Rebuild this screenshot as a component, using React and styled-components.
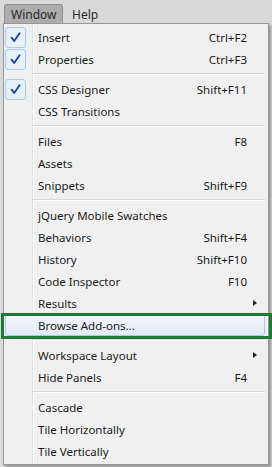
import React from "react";
import styled, { createGlobalStyle } from "styled-components";

const GlobalStyle = createGlobalStyle`
  body {
    margin: 0;
    background: #d9d9d9;
    font-family: "Segoe UI", "Noto Sans", "DejaVu Sans", sans-serif;
    font-size: 11.5px;
    color: #1b1b1b;
    overflow: hidden;
  }
`;

const Screen = styled.div`
  width: 272px;
  height: 467px;
  overflow: hidden;
`;

const MenuBar = styled.div`
  height: 23px;
  display: flex;
  align-items: flex-end;
  padding-left: 4px;
  gap: 1px;
  box-sizing: border-box;
  font-size: 12px;
`;

const Tab = styled.div`
  height: 19px;
  box-sizing: border-box;
  padding: 0 6px 0 ${(p) => (p.$active ? "6px" : "7px")};
  display: flex;
  align-items: center;
  color: #2a2a2a;
  border-radius: 3px 3px 0 0;
  background: ${(p) => (p.$active ? "#acacac" : "transparent")};
  border: 1px solid ${(p) => (p.$active ? "#8f8f8f" : "transparent")};
  border-bottom: none;
  width: ${(p) => (p.$active ? "59px" : "auto")};
`;

const Menu = styled.div`
  position: relative;
  margin-left: 3px;
  width: 266px;
  box-sizing: border-box;
  border: 1px solid #979797;
  padding: 2px 3px 2px 1px;
  background-color: #f0f0f0;
  background-image: linear-gradient(
    to right,
    transparent 28px,
    #e2e3e3 28px,
    #e2e3e3 29px,
    #ffffff 29px,
    #ffffff 30px,
    transparent 30px
  );
  box-shadow: 2px 2px 2px rgba(0, 0, 0, 0.3);
`;

const Row = styled.div`
  position: relative;
  height: 22px;
  box-sizing: border-box;
  display: grid;
  grid-template-columns: 32px 1fr auto 17px;
  align-items: center;
  border: 1px solid ${(p) => (p.$hot ? "#a9c8ec" : "transparent")};
  border-radius: 3px;
  background: ${(p) =>
    p.$hot ? "linear-gradient(#f3f7fd, #e1eaf7)" : "transparent"};
`;

const CheckBox = styled.div`
  width: 21px;
  height: 21px;
  box-sizing: border-box;
  margin-left: -1px;
  border: 1px solid #a9cbef;
  border-radius: 3px;
  background: #e8f0fa;
  display: flex;
  align-items: center;
  justify-content: center;
`;

const Label = styled.span`
  white-space: nowrap;
`;

const Shortcut = styled.span`
  white-space: nowrap;
  text-align: right;
`;

const Arrow = styled.span`
  justify-self: start;
  margin-left: 6px;
  width: 0;
  height: 0;
  border-top: 3.5px solid transparent;
  border-bottom: 3.5px solid transparent;
  border-left: 4px solid #222;
`;

const Separator = styled.div`
  height: 8px;
  display: flex;
  align-items: center;
  padding-left: 28px;
  &::after {
    content: "";
    flex: 1;
    height: 1px;
    background: #d7d7d7;
    border-bottom: 1px solid #ffffff;
  }
`;

const Highlight = styled.div`
  position: absolute;
  top: -2px;
  bottom: -4px;
  left: -5px;
  right: -8px;
  border: 3px solid #1f7a38;
  pointer-events: none;
`;

const Check = () => (
  <svg width="11" height="11" viewBox="0 0 11 11">
    <path
      d="M1.6 5.6 L4.2 9 L9.6 1.2"
      fill="none"
      stroke="#1c3fa6"
      strokeWidth="1.8"
      strokeLinecap="round"
      strokeLinejoin="round"
    />
  </svg>
);

const items = [
  { label: "Insert", key: "Ctrl+F2", checked: true },
  { label: "Properties", key: "Ctrl+F3", checked: true },
  "sep",
  { label: "CSS Designer", key: "Shift+F11", checked: true },
  { label: "CSS Transitions" },
  "sep",
  { label: "Files", key: "F8" },
  { label: "Assets" },
  { label: "Snippets", key: "Shift+F9" },
  "sep",
  { label: "jQuery Mobile Swatches" },
  { label: "Behaviors", key: "Shift+F4" },
  { label: "History", key: "Shift+F10" },
  { label: "Code Inspector", key: "F10" },
  { label: "Results", sub: true },
  { label: "Browse Add-ons...", hot: true },
  "sep",
  { label: "Workspace Layout", sub: true },
  { label: "Hide Panels", key: "F4" },
  "sep",
  { label: "Cascade" },
  { label: "Tile Horizontally" },
  { label: "Tile Vertically" },
];

export default function App() {
  return (
    <Screen>
      <GlobalStyle />
      <MenuBar>
        <Tab $active>Window</Tab>
        <Tab>Help</Tab>
      </MenuBar>
      <Menu>
        {items.map((it, i) =>
          it === "sep" ? (
            <Separator key={i} />
          ) : (
            <Row key={i} $hot={it.hot}>
              <span>
                {it.checked && (
                  <CheckBox>
                    <Check />
                  </CheckBox>
                )}
              </span>
              <Label>{it.label}</Label>
              <Shortcut>{it.key}</Shortcut>
              {it.sub ? <Arrow /> : <span />}
              {it.hot && <Highlight />}
            </Row>
          )
        )}
      </Menu>
    </Screen>
  );
}
